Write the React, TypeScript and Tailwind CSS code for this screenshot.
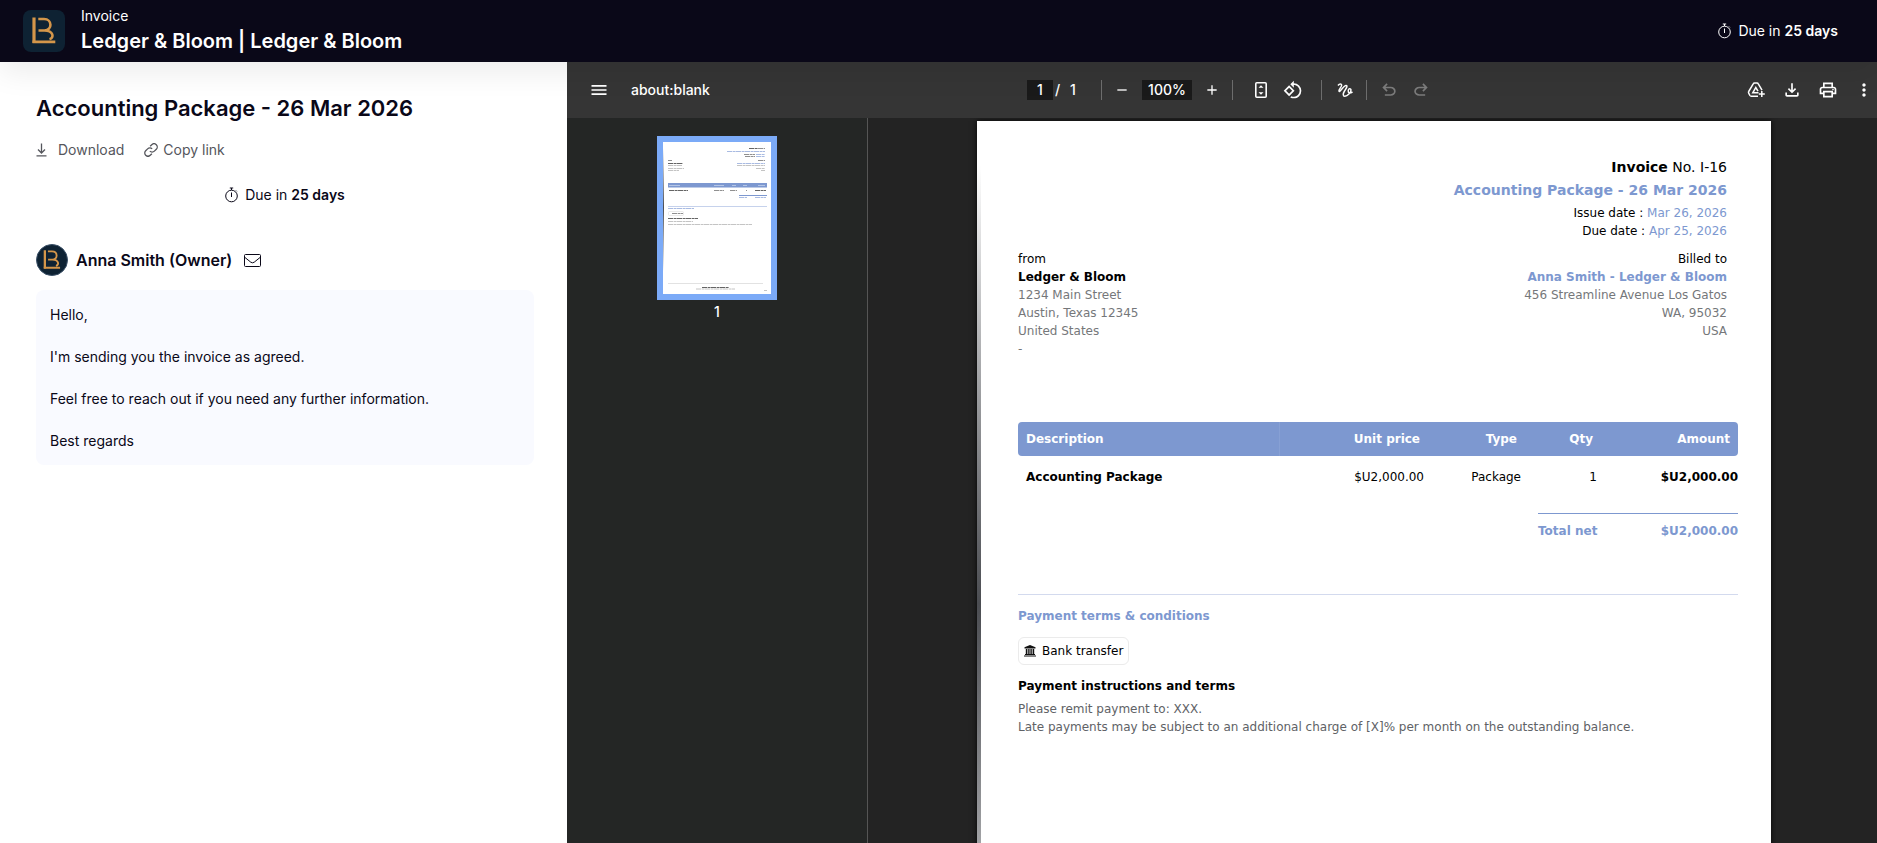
import type { ReactNode } from 'react'
import {
  MdAdd,
  MdMenu,
  MdMoreVert,
  MdOutlineFileDownload,
  MdOutlinePrint,
  MdRemove,
  MdRotate90DegreesCcw,
} from 'react-icons/md'

type LineItem = {
  description: string
  unitPrice: string
  type: string
  qty: number
  amount: string
}

const ITEMS: LineItem[] = [
  { description: 'Accounting Package', unitPrice: '$U2,000.00', type: 'Package', qty: 1, amount: '$U2,000.00' },
]

const MESSAGE = [
  'Hello,',
  "I'm sending you the invoice as agreed.",
  'Feel free to reach out if you need any further information.',
  'Best regards',
]

export default function App() {
  return (
    <div className="flex h-screen flex-col overflow-hidden bg-white font-['Inter',sans-serif] text-sm text-[#0a0818]">
      <Header />
      <div className="flex min-h-0 flex-1">
        <MessagePanel />
        <PdfViewer />
      </div>
    </div>
  )
}

function Header() {
  return (
    <header className="relative z-10 flex h-[62px] shrink-0 items-center justify-between bg-[#0a0818] pr-[39px] pl-[23px] text-white shadow-[0_10px_30px_rgba(0,0,0,0.08)]">
      <div className="flex items-center gap-4">
        <Monogram className="size-[42px] rounded-lg" />
        <div>
          <p className="leading-5">Invoice</p>
          <h1 className="text-xl leading-[30px] font-semibold">Ledger &amp; Bloom | Ledger &amp; Bloom</h1>
        </div>
      </div>
      <DueIn />
    </header>
  )
}

function DueIn() {
  return (
    <p className="flex items-center gap-[7px]">
      <StopwatchIcon />
      <span>
        Due in <span className="font-semibold">25 days</span>
      </span>
    </p>
  )
}

function MessagePanel() {
  return (
    <section className="w-[567px] shrink-0 px-9 pt-[30px] pr-[33px]">
      <h2 className="text-[22px] leading-8 font-semibold">Accounting Package - 26 Mar 2026</h2>

      <div className="mt-4 flex items-center gap-5 text-[#55565c]">
        <button className="flex items-center gap-[11px]">
          <DownloadIcon />
          Download
        </button>
        <button className="flex items-center gap-[5px]">
          <LinkIcon />
          Copy link
        </button>
      </div>

      <div className="mt-6 flex h-[22px] items-center justify-center">
        <DueIn />
      </div>

      <div className="mt-[38px] flex items-center gap-2">
        <Monogram className="size-8 rounded-full border border-[#3b5168]" />
        <span className="text-base font-semibold">Anna Smith (Owner)</span>
        <button aria-label="Send email" className="ml-1">
          <MailIcon />
        </button>
      </div>

      <div className="mt-[14px] flex flex-col gap-[21px] rounded-lg bg-[#f9faff] p-[14px] leading-[21px]">
        {MESSAGE.map((line) => (
          <p key={line}>{line}</p>
        ))}
      </div>
    </section>
  )
}

function PdfViewer() {
  return (
    <section className="flex min-w-0 flex-1 flex-col">
      <Toolbar />
      <div className="flex min-h-0 flex-1">
        <aside className="flex w-[301px] shrink-0 flex-col items-center border-r border-[#555] bg-[#242625] pt-[18px] text-white">
          <button className="bg-[#7baaf7] p-1.5" aria-label="Page 1">
            <Thumbnail />
          </button>
          <span className="mt-0.5 font-medium">1</span>
        </aside>
        <div className="flex min-w-0 flex-1 justify-center overflow-hidden bg-[#232323] pt-[3px] pl-[3px]">
          <InvoicePage />
        </div>
      </div>
    </section>
  )
}

function Toolbar() {
  return (
    <div className="grid h-14 shrink-0 grid-cols-[1fr_auto_1fr] items-center bg-[#353535] text-white">
      <div className="flex items-center gap-[22px] pl-[22px]">
        <ToolButton label="Menu">
          <MdMenu />
        </ToolButton>
        <span className="font-medium">about:blank</span>
      </div>

      <div className="flex items-center pl-3.5 font-medium">
        <input
          aria-label="Page number"
          defaultValue="1"
          className="h-5 w-[26px] bg-[#1a1a1a] text-center outline-none"
        />
        <span className="ml-0.5 w-2">/</span>
        <span className="ml-1 w-3 text-center">1</span>
        <Separator className="ml-[22px]" />
        <div className="ml-2.5 flex items-center gap-2.5">
          <ToolButton label="Zoom out">
            <MdRemove className="size-4" />
          </ToolButton>
          <input
            aria-label="Zoom level"
            defaultValue="100%"
            className="h-5 w-[50px] bg-[#1a1a1a] text-center outline-none"
          />
          <ToolButton label="Zoom in">
            <MdAdd className="size-4" />
          </ToolButton>
        </div>
        <Separator className="ml-2.5" />
        <div className="mx-[18px] flex items-center gap-3">
          <ToolButton label="Fit to page">
            <FitPageIcon />
          </ToolButton>
          <ToolButton label="Rotate">
            <MdRotate90DegreesCcw />
          </ToolButton>
        </div>
        <Separator />
        <div className="mx-3">
          <ToolButton label="Draw">
            <DrawIcon />
          </ToolButton>
        </div>
        <Separator />
        <div className="ml-3 flex items-center gap-3 text-[#7c7c7c]">
          <ToolButton label="Undo">
            <UndoIcon />
          </ToolButton>
          <ToolButton label="Redo">
            <RedoIcon />
          </ToolButton>
        </div>
      </div>

      <div className="flex items-center justify-end gap-4 pr-[3px]">
        <ToolButton label="Save to Drive">
          <DriveAddIcon />
        </ToolButton>
        <ToolButton label="Download">
          <MdOutlineFileDownload />
        </ToolButton>
        <ToolButton label="Print">
          <MdOutlinePrint />
        </ToolButton>
        <ToolButton label="More actions">
          <MdMoreVert />
        </ToolButton>
      </div>
    </div>
  )
}

function ToolButton({ label, children }: { label: string; children: ReactNode }) {
  return (
    <button aria-label={label} className="flex size-5 items-center justify-center text-xl">
      {children}
    </button>
  )
}

function Separator({ className = '' }: { className?: string }) {
  return <span className={`h-5 w-px bg-[#6e6e6e] ${className}`} />
}

function InvoicePage() {
  return (
    <article className="relative h-[1123px] w-[794px] shrink-0 bg-white pt-[33px] pr-[33px] pl-[41px] font-['DejaVu_Sans',sans-serif] text-xs leading-[18px] text-black shadow-[0_0_6px_rgba(0,0,0,0.8)]">
      {/* page edge */}
      <div className="absolute inset-y-0 left-0 w-1 bg-linear-to-b from-white from-4% via-[#4b4d52] via-43% to-white to-85%" />

      <div className="pr-[11px] text-right">
        <p className="text-sm leading-[26px]">
          <b>Invoice</b> No. I-16
        </p>
        <p className="mb-1 text-sm leading-5 font-bold text-[#7d98d0]">Accounting Package - 26 Mar 2026</p>
        <p>
          Issue date : <span className="text-[#7d98d0]">Mar 26, 2026</span>
        </p>
        <p>
          Due date : <span className="text-[#7d98d0]">Apr 25, 2026</span>
        </p>
      </div>

      <div className="mt-2.5 flex justify-between pr-[11px] text-[#75777a]">
        <address className="not-italic">
          <p className="text-black">from</p>
          <p className="font-bold text-black">Ledger &amp; Bloom</p>
          <p>1234 Main Street</p>
          <p>Austin, Texas 12345</p>
          <p>United States</p>
          <p>-</p>
        </address>
        <address className="text-right not-italic">
          <p className="text-black">Billed to</p>
          <p className="font-bold text-[#7d98d0]">Anna Smith - Ledger &amp; Bloom</p>
          <p>456 Streamline Avenue Los Gatos</p>
          <p>WA, 95032</p>
          <p>USA</p>
        </address>
      </div>

      <table className="mt-16 w-full table-fixed border-separate border-spacing-0 text-right">
        <colgroup>
          <col />
          <col className="w-[148px]" />
          <col className="w-[97px]" />
          <col className="w-[76px]" />
          <col className="w-[137px]" />
        </colgroup>
        <thead>
          <tr className="h-[34px] text-white *:bg-[#7d98d0] *:px-2">
            <th className="rounded-l border-r border-[#87a0d4] text-left">Description</th>
            <th>Unit price</th>
            <th>Type</th>
            <th>Qty</th>
            <th className="rounded-r">Amount</th>
          </tr>
        </thead>
        <tbody>
          {ITEMS.map((item) => (
            <tr key={item.description} className="h-[42px]">
              <td className="pl-2 text-left font-bold">{item.description}</td>
              <td className="pr-1">{item.unitPrice}</td>
              <td className="pr-1">{item.type}</td>
              <td className="pr-1">{item.qty}</td>
              <td className="font-bold">{item.amount}</td>
            </tr>
          ))}
        </tbody>
      </table>

      <div className="mt-[15px] ml-auto flex w-[200px] justify-between border-t border-[#7d98d0] pt-2 font-bold text-[#7d98d0]">
        <span>Total net</span>
        <span>$U2,000.00</span>
      </div>

      <div className="mt-[54px] border-t border-[#d3daee] pt-3">
        <h3 className="font-bold text-[#7d98d0]">Payment terms &amp; conditions</h3>
        <p className="mt-3 flex h-7 w-fit items-center gap-1.5 rounded-md border border-[#ebebeb] px-[5px]">
          <BankIcon />
          Bank transfer
        </p>
        <h4 className="mt-3 font-bold">Payment instructions and terms</h4>
        <div className="mt-[5px] text-[#606266]">
          <p>Please remit payment to: XXX.</p>
          <p>Late payments may be subject to an additional charge of [X]% per month on the outstanding balance.</p>
        </div>
      </div>
    </article>
  )
}

// Tiny preview of the page, text shown as strokes
function Thumbnail() {
  return (
    <svg width="108" height="152" viewBox="0 0 108 152" className="block bg-white">
      <defs>
        <linearGradient id="thumb-edge" x1="0" y1="0" x2="0" y2="1">
          <stop offset="0.04" stopColor="#fff" />
          <stop offset="0.43" stopColor="#4b4d52" />
          <stop offset="0.85" stopColor="#fff" />
        </linearGradient>
      </defs>
      <rect width="1" height="152" fill="url(#thumb-edge)" />
      <g fill="none" strokeWidth="1" strokeDasharray="5 0.6 3 0.4">
        <g stroke="#222">
          <path d="M86 6.5H95M5 21.5H20M6 48.5H25M92 48.5H103M5 76.5H35M39 145.5H66" strokeOpacity="0.7" />
          <path d="M95 6.500H102M81 12.5H92M82 14.5H92M95 18.5H102M5 18.5H9" strokeOpacity="0.5" />
          <path d="M51 48.5H61M67 48.5H74M83 48.5H84M9 71.5H20" strokeOpacity="0.5" />
        </g>
        <g stroke="#a9bbe2">
          <path d="M64 9.5H102M93 12.5H102M93 14.5H102M74 21.5H102M76 55.5H84M92 55.5H103M5 66.5H31" />
        </g>
        <g stroke="#c4c4c4">
          <path d="M74 23.5H102M93 26.5H102M98 28.5H102M5 23.5H19M5 26.5H21M5 28.5H16M5 79.5H30M5 82.5H89M101 148.5H104M33 147H72" />
        </g>
      </g>
      <rect x="5" y="41" width="99" height="4.5" fill="#7d98d0" />
      <path d="M6 43.5H17M51 43.5H61M69 43.5H73M80 43.5H84M95 43.5H102" stroke="#c3d0ea" strokeWidth="0.8" />
      <path d="M76 53.5H104" stroke="#7d98d0" />
      <path d="M5 64.5H104" stroke="#c6d2ec" />
      <rect x="5.5" y="69.5" width="15" height="4" rx="1" fill="none" stroke="#ddd" strokeWidth="0.6" />
      <path d="M5 141.5H100" stroke="#e2e2e2" />
    </svg>
  )
}

function Monogram({ className }: { className: string }) {
  return (
    <svg viewBox="0 0 42 42" className={`shrink-0 bg-[#0e2233] ${className}`}>
      <g fill="none" stroke="#d4964a">
        <path d="M11 7.500V33" strokeWidth="3.200" />
        <path d="M9.500 31.800H32.300" strokeWidth="2.800" />
        <path
          d="M15.300 9H21C29.500 9 29.500 20.500 21.500 20.500H15.500M21.500 20.500C30.500 20.500 31.500 28 26.500 29.300"
          strokeWidth="2.600"
        />
      </g>
    </svg>
  )
}

function StopwatchIcon() {
  return (
    <svg width="13" height="16" viewBox="0 0 13 16" fill="none" stroke="currentColor">
      <circle cx="6.500" cy="9" r="5.800" />
      <path d="M6.500 5.500V10M6.500 1V3M4.800 1H8.200M11 3.500L11.800 4.300" />
    </svg>
  )
}

function DownloadIcon() {
  return (
    <svg width="11" height="14" viewBox="0 0 11 14" fill="none" stroke="currentColor" strokeWidth="1.300">
      <path d="M5.500 0.500V9.500M2 6.500L5.500 10L9 6.500M0.500 12.800H10.500" />
    </svg>
  )
}

function LinkIcon() {
  return (
    <svg width="14" height="14" viewBox="0 0 24 24" fill="none" stroke="currentColor" strokeWidth="2.200">
      <path d="M10 14a5.500 5.500 0 0 0 7.800 0l3.300-3.300a5.500 5.500 0 0 0-7.800-7.800L10.500 5.700" />
      <path d="M14 10a5.500 5.500 0 0 0-7.800 0l-3.300 3.300a5.500 5.500 0 0 0 7.800 7.800l2.800-2.800" />
    </svg>
  )
}

function MailIcon() {
  return (
    <svg width="17" height="13" viewBox="0 0 17 13" fill="none" stroke="currentColor">
      <rect x="0.500" y="0.500" width="16" height="12" rx="1" />
      <path d="M1 3.500L6.800 8.200Q8.500 9.400 10.200 8.200L16 3.500" />
    </svg>
  )
}

function FitPageIcon() {
  return (
    <svg width="20" height="20" viewBox="0 0 20 20" fill="none">
      <rect x="4.800" y="2.800" width="10.400" height="14.400" rx="1" stroke="currentColor" strokeWidth="1.600" />
      <path d="M10 5.200L12.500 7.800H7.500ZM10 14.800L12.500 12.200H7.500Z" fill="currentColor" />
    </svg>
  )
}

function DrawIcon() {
  return (
    <svg width="20" height="20" viewBox="0 0 20 20" fill="none" stroke="currentColor" strokeWidth="1.500">
      <path d="M4 5.500C5.500 3.500 7.800 3.500 7.600 5.500C7.300 7.500 4.300 9.500 5 11.200C6 12.800 9.500 5.500 12 5.500C14.200 5.700 12 8.500 10.500 11C8.800 13.800 8.800 16.300 10.800 16.300C13.500 16.300 17 12.500 17 10C17 8.300 14.300 8.300 14.200 10.800C14.100 13.300 16 13.500 18.500 12" />
    </svg>
  )
}

function DriveAddIcon() {
  return (
    <svg width="20" height="20" viewBox="0 0 20 20" fill="none" stroke="currentColor" strokeWidth="1.500">
      <path d="M16 10.200L12.300 3.800Q11.900 3 11 3H8.500Q7.600 3 7.200 3.800L2.700 11.500Q2.200 12.300 2.700 13.100L3.900 15.500Q4.300 16.200 5.200 16.200H12" />
      <path d="M12.500 12.800H6.800L9.800 7.500L12 11.200" />
      <path d="M15.800 11V17M12.800 14H18.800" />
    </svg>
  )
}

function UndoIcon() {
  return (
    <svg width="20" height="20" viewBox="0 -960 960 960" fill="currentColor">
      <path d="M280-200v-80h284q63 0 109.500-40T720-420q0-60-46.500-100T564-560H312l104 104-56 56-200-200 200-200 56 56-104 104h252q97 0 169.500 63T800-420q0 94-72.500 157T564-200H280Z" />
    </svg>
  )
}

function RedoIcon() {
  return (
    <svg width="20" height="20" viewBox="0 -960 960 960" fill="currentColor">
      <path d="M396-200q-97 0-169.500-63T154-420q0-94 72.500-157T396-640h252L544-744l56-56 200 200-200 200-56-56 104-104H396q-63 0-109.500 40T234-420q0 60 46.500 100T396-280h284v80H396Z" />
    </svg>
  )
}

function BankIcon() {
  return (
    <svg width="12" height="12" viewBox="0 0 12 12" fill="#111">
      <path d="M6 0L11.500 2.200V3.400H0.500V2.200ZM1.800 4H3.400V9H1.800ZM4.200 4H5.600V9H4.200ZM6.400 4H7.800V9H6.400ZM8.600 4H10.200V9H8.600ZM1 9H11V10H1ZM0 10.400H12V11.600H0Z" />
    </svg>
  )
}
